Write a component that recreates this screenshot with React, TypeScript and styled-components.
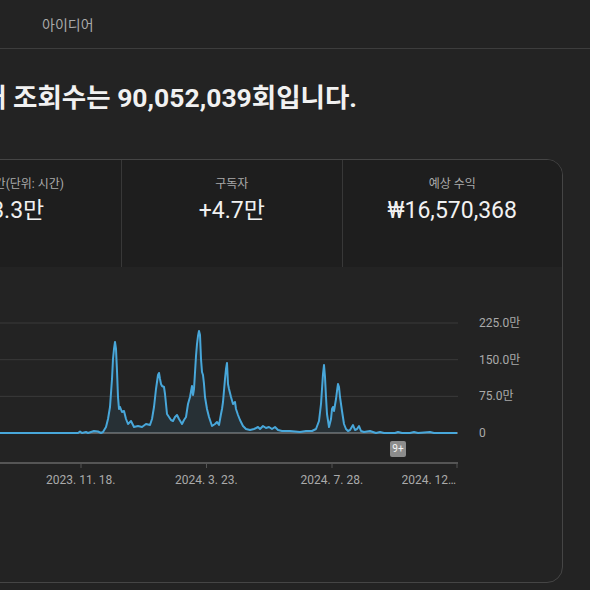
import styled, { createGlobalStyle } from 'styled-components'

const GlobalStyle = createGlobalStyle`
  html, body {
    margin: 0;
    background: #232323;
  }
  body {
    font-family: Roboto, "Noto Sans CJK KR", sans-serif;
    color: #f1f1f1;
  }
`

const Page = styled.div`
  width: 590px;
  height: 590px;
  overflow: hidden;
  background: #232323;
`

const TabBar = styled.nav`
  height: 48px;
  padding-left: 42px;
  border-bottom: 1px solid #3d3d3d;
  display: flex;
  align-items: center;
  gap: 32px;
`

const Tab = styled.span`
  font-size: 14px;
  color: #aaaaaa;
  white-space: nowrap;
`

const Content = styled.main`
  margin-left: -321px;
  width: 884px;
`

const Headline = styled.h1`
  margin: 33px 0 0;
  padding-left: 168px;
  font-size: 26.5px;
  line-height: 32px;
  font-weight: 700;
  white-space: nowrap;
  color: #f1f1f1;
`

const Card = styled.section`
  margin-top: 45px;
  height: 424px;
  box-sizing: border-box;
  border: 1px solid #454545;
  border-radius: 16px;
  overflow: hidden;
  display: flex;
  flex-direction: column;
`

const Stats = styled.div`
  display: grid;
  grid-template-columns: repeat(4, 1fr);
  height: 107px;
  background: #1e1e1e;
`

const Stat = styled.div`
  padding-top: 16px;
  text-align: center;
  & + & {
    border-left: 1px solid #383838;
  }
`

const StatLabel = styled.div`
  font-size: 12px;
  line-height: 16px;
  color: #aaaaaa;
`

const StatValue = styled.div`
  margin-top: 4px;
  font-size: 23px;
  line-height: 30px;
  color: #f1f1f1;
`

const ChartArea = styled.div`
  padding: 36px 0 0 24px;
  display: flex;
  gap: 21px;
`

const Plot = styled.div`
  position: relative;
  width: 754px;
  display: flex;
  flex-direction: column;
`

const XAxis = styled.div`
  display: flex;
  margin-top: 3px;
  padding-left: 314px;
`

const XLabel = styled.span<{ $last?: boolean }>`
  flex-shrink: 0;
  width: ${(p) => (p.$last ? '56px' : '125.5px')};
  margin-left: ${(p) => (p.$last ? '7px' : '0')};
  text-align: ${(p) => (p.$last ? 'left' : 'center')};
  font-size: 12px;
  line-height: 16px;
  color: #aaaaaa;
  white-space: nowrap;
  overflow: hidden;
  text-overflow: ellipsis;
`

const YAxis = styled.div`
  padding-top: 12px;
  display: flex;
  flex-direction: column;
  gap: 20.67px;
`

const YLabel = styled.span`
  font-size: 12px;
  line-height: 16px;
  color: #aaaaaa;
`

const Marker = styled.span`
  position: absolute;
  left: 686px;
  top: 138px;
  width: 16px;
  height: 16px;
  border-radius: 2px;
  background: #8c8c8c;
  color: #f4f4f4;
  font-size: 10px;
  line-height: 16px;
  text-align: center;
`

const stats = [
  { label: '조회수', value: '9,005.2만' },
  { label: '시청 시간(단위: 시간)', value: '43.3만' },
  { label: '구독자', value: '+4.7만' },
  { label: '예상 수익', value: '₩16,570,368' },
]

// screen x, y of the line; shifted into svg space by OFFSET
const OFFSET = 296
const BASE = 434
const pts: [number, number][] = [
  [-296, 434], [40, 434], [78, 434], [80, 432.5], [82, 434], [86, 433], [88, 434], [94, 432], [98, 432.5],
  [101, 434], [103, 433], [106, 428], [108, 420], [110, 408], [112, 380], [113, 360], [114, 350], [115, 343],
  [116, 350], [117, 372], [118, 398], [119, 410], [120, 408], [122, 413], [124, 412], [126, 420], [128, 425],
  [131, 422], [134, 428], [138, 427], [142, 428], [146, 425], [150, 426], [152, 420], [154, 408], [156, 390],
  [158, 376], [159, 374], [160, 380], [161, 385], [162, 387], [164, 388], [165, 395], [167, 415], [169, 418],
  [171, 421], [173, 422], [175, 418], [177, 416], [179, 420], [182, 425], [184, 421], [186, 418], [188, 405],
  [190, 398], [192, 387], [193, 396], [194, 390], [196, 357], [197, 345], [198, 337], [199, 332], [200, 336],
  [201, 360], [202, 373], [203, 376], [204, 385], [205, 398], [207, 410], [209, 418], [212, 427], [215, 425],
  [217, 423], [219, 426], [221, 415], [222, 410], [223, 403], [225, 380], [226, 370], [227, 364], [228, 385],
  [229, 390], [231, 398], [233, 405], [235, 403], [236, 410], [238, 416], [240, 421], [243, 427], [246, 430],
  [250, 431], [254, 430], [258, 428], [260, 430], [263, 427], [266, 429], [269, 428], [272, 430], [275, 428],
  [278, 431], [282, 432], [290, 432], [300, 433], [306, 432], [312, 432], [316, 430], [319, 422], [321, 405],
  [322, 390], [323, 375], [324, 366], [325, 378], [326, 398], [327, 415], [329, 428], [331, 420], [332, 410],
  [333, 408], [334, 412], [335, 406], [336, 400], [337, 392], [338, 385], [339, 388], [340, 398], [342, 412],
  [344, 425], [346, 430], [348, 432], [350, 431], [353, 426], [355, 431], [357, 430], [359, 427], [361, 432],
  [364, 433], [370, 432], [376, 434], [380, 433], [384, 434], [395, 434], [398, 433], [402, 434], [410, 434],
  [414, 433], [418, 434], [430, 433], [434, 434], [457, 434],
]

const TOP = 304
const toSvg = ([x, y]: [number, number]) => `${(x + OFFSET).toFixed(1)},${(y - TOP).toFixed(1)}`
const linePath = 'M' + pts.map(toSvg).join(' L')
const areaPath = linePath + ` L${457 + OFFSET},${BASE - TOP} L0,${BASE - TOP} Z`

const grid = [20, 56.67, 93.33]
const ticks = [81, 206.5, 332, 457]

const Chart = () => (
  <svg width="754" height="166" viewBox="0 0 754 166">
    {grid.map((y) => (
      <line key={y} x1="0" x2="754" y1={y} y2={y} stroke="#3a3a3a" strokeWidth="1" />
    ))}
    <line x1="0" x2="754" y1="130" y2="130" stroke="#9a9a9a" strokeWidth="1" />
    <path d={areaPath} fill="#4aa8d8" fillOpacity="0.1" />
    <path d={linePath} fill="none" stroke="#48a7da" strokeWidth="2" strokeLinejoin="round" />
    <line x1="0" x2="754" y1="160" y2="160" stroke="#555555" strokeWidth="2" />
    {ticks.map((t) => (
      <line key={t} x1={t + OFFSET} x2={t + OFFSET} y1="160" y2="165" stroke="#555555" strokeWidth="1" />
    ))}
  </svg>
)

const App = () => {
  return (
    <Page>
      <GlobalStyle />
      <TabBar>
        <Tab>아이디어</Tab>
      </TabBar>
      <Content>
        <Headline>선택한 기간 내 조회수는 90,052,039회입니다.</Headline>
        <Card>
          <Stats>
            {stats.map((s) => (
              <Stat key={s.label}>
                <StatLabel>{s.label}</StatLabel>
                <StatValue>{s.value}</StatValue>
              </Stat>
            ))}
          </Stats>
          <ChartArea>
            <Plot>
              <Chart />
              <XAxis>
                <XLabel>2023. 11. 18.</XLabel>
                <XLabel>2024. 3. 23.</XLabel>
                <XLabel>2024. 7. 28.</XLabel>
                <XLabel $last>2024. 12. 1.</XLabel>
              </XAxis>
              <Marker>9+</Marker>
            </Plot>
            <YAxis>
              <YLabel>225.0만</YLabel>
              <YLabel>150.0만</YLabel>
              <YLabel>75.0만</YLabel>
              <YLabel>0</YLabel>
            </YAxis>
          </ChartArea>
        </Card>
      </Content>
    </Page>
  )
}

export default App
